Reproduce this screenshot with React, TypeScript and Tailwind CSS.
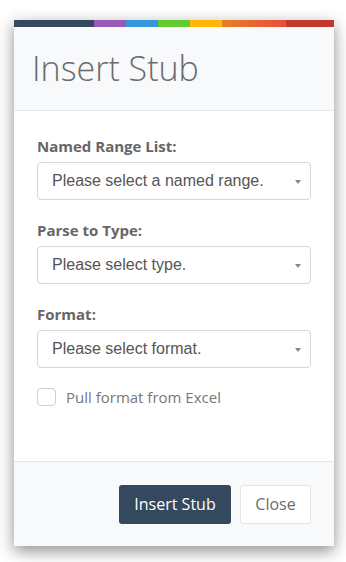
import React from "react";

function Select({ text }: { text: string }) {
  return (
    <div className="relative flex h-[38px] w-[274px] items-center rounded-[4px] border border-[#d6d6d6] bg-white pl-[14px] text-[16px] text-[#555555]" style={{ fontFamily: '"Liberation Sans", Arial, sans-serif' }}>
      <span>{text}</span>
      <span className="absolute right-[9px] top-[17px] h-0 w-0 border-x-[3px] border-t-[4px] border-x-transparent border-t-[#888888]" />
    </div>
  );
}

function Label({ text }: { text: string }) {
  return (
    <div className="mb-[6px] h-[20px] text-[15px] font-bold leading-[20px] text-[#666666]">{text}</div>
  );
}

export default function App() {
  return (
    <div className="min-h-[562px] bg-white pt-[20px] pl-[14px]" style={{ fontFamily: '"Open Sans", sans-serif' }}>
      <div className="w-[320px] shadow-[0_5px_15px_rgba(0,0,0,0.45)]">
        <div className="flex h-[7px]">
          <div className="w-[80px] bg-[#34495e]" />
          <div className="w-[32px] bg-[#9b59b6]" />
          <div className="w-[32px] bg-[#3498db]" />
          <div className="w-[32px] bg-[#62cb31]" />
          <div className="w-[32px] bg-[#ffb606]" />
          <div className="w-[64px] bg-gradient-to-r from-[#e67e22] to-[#e74c3c]" />
          <div className="w-[48px] bg-[#c0392b]" />
        </div>
        <div className="flex h-[84px] items-center border-b border-[#e4e5e7] bg-[#f7f9fa] pl-[18px]">
          <h1 className="mb-[2px] text-[34px] font-light leading-none text-[#6a6c6f]">Insert Stub</h1>
        </div>
        <div className="h-[350px] bg-white px-[23px] pt-[25px]">
          <Label text="Named Range List:" />
          <Select text="Please select a named range." />
          <div className="h-[20px]" />
          <Label text="Parse to Type:" />
          <Select text="Please select type." />
          <div className="h-[20px]" />
          <Label text="Format:" />
          <Select text="Please select format." />
          <div className="mt-[18px] flex items-center gap-[10px]">
            <div className="h-[18px] w-[19px] rounded-[4px] border border-[#cfcfcf] bg-white" />
            <span className="text-[15px] text-[#777777]">Pull format from Excel</span>
          </div>
        </div>
        <div className="flex h-[85px] items-center justify-end gap-[9px] border-t border-[#e4e5e7] bg-[#f7f9fa] pr-[23px]">
          <button className="h-[39px] w-[112px] rounded-[3px] bg-[#34495e] text-[16px] text-white">Insert Stub</button>
          <button className="h-[39px] w-[71px] rounded-[3px] border border-[#e4e5e7] bg-white text-[16px] text-[#6a6c6f]">Close</button>
        </div>
      </div>
    </div>
  );
}
